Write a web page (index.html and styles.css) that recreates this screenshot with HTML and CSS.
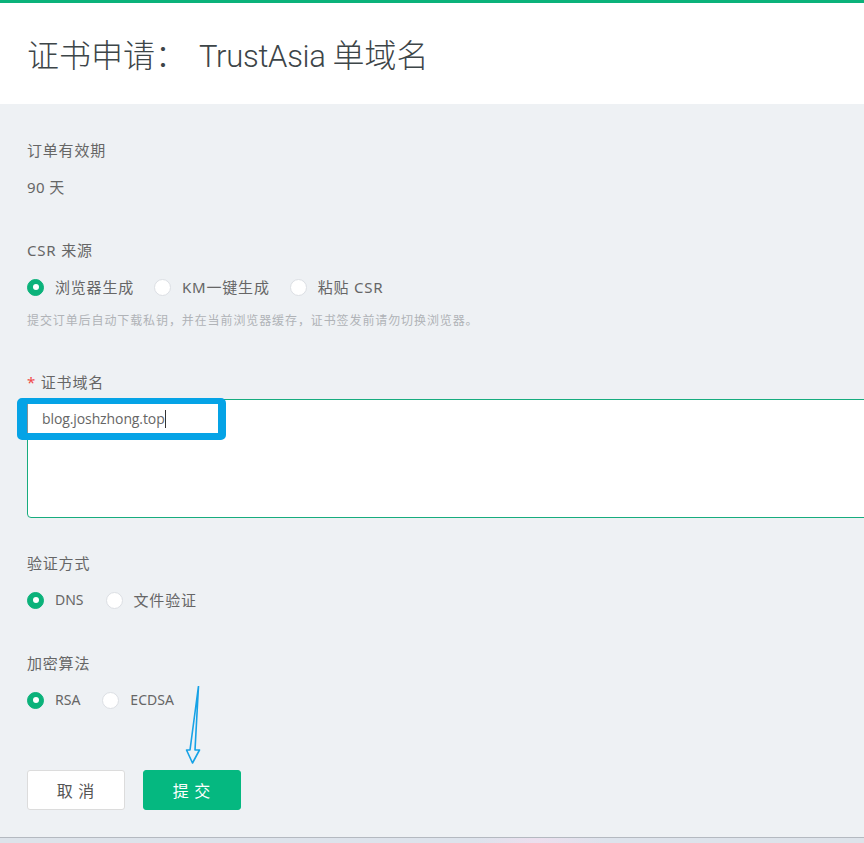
FILE: index.html
```html
<!DOCTYPE html>
<html lang="zh-CN">
<head>
<meta charset="utf-8">
<title>证书申请</title>
<link rel="stylesheet" href="styles.css">
</head>
<body>
<div class="page">
  <header class="header">
    <h1 class="title">证书申请：<span class="title-latin">TrustAsia</span> 单域名</h1>
  </header>
  <main class="main">
    <div class="field field-first">
      <div class="label">订单有效期</div>
      <div class="value">90 天</div>
    </div>

    <div class="field field-csr">
      <div class="label">CSR 来源</div>
      <div class="radios">
        <span class="radio checked"></span><span class="radio-label">浏览器生成</span>
        <span class="radio"></span><span class="radio-label">KM一键生成</span>
        <span class="radio"></span><span class="radio-label">粘贴 CSR</span>
      </div>
      <div class="help">提交订单后自动下载私钥，并在当前浏览器缓存，证书签发前请勿切换浏览器。</div>
    </div>

    <div class="field field-domain">
      <div class="label label-tight"><span class="req">*</span> 证书域名</div>
      <div class="textarea-wrap">
        <div class="textarea"></div>
        <div class="highlight"><span class="hl-text">blog.joshzhong.top</span><span class="caret"></span></div>
      </div>
    </div>

    <div class="field field-verify">
      <div class="label">验证方式</div>
      <div class="radios">
        <span class="radio checked"></span><span class="radio-label latin">DNS</span>
        <span class="radio"></span><span class="radio-label">文件验证</span>
      </div>
    </div>

    <div class="field field-algo">
      <div class="label">加密算法</div>
      <div class="radios">
        <span class="radio checked"></span><span class="radio-label latin">RSA</span>
        <span class="radio"></span><span class="radio-label latin">ECDSA</span>
      </div>
    </div>

    <div class="actions">
      <button class="btn btn-cancel">取 消</button>
      <button class="btn btn-submit">提 交</button>
    </div>

    <svg class="arrow" width="30" height="90" viewBox="180 680 30 90" xmlns="http://www.w3.org/2000/svg">
      <path d="M198.5 685 L190 749 L186.5 749 L192.5 762 L199.5 749 L195 749 L198.5 685" fill="none" stroke="#16a2e6" stroke-width="1.6" stroke-linejoin="round"/>
    </svg>
  </main>
  <div class="footer-strip"></div>
</div>
</body>
</html>
```

FILE: styles.css
```css
* { box-sizing: border-box; }

html, body {
  margin: 0;
  padding: 0;
  overflow: hidden;
}

body {
  font-family: "Noto Sans", "Noto Sans CJK SC", sans-serif;
  color: #666;
  background: #dfe4ec;
}

.page {
  width: 864px;
  height: 843px;
  display: flex;
  flex-direction: column;
}

.header {
  height: 104px;
  background: #fff;
  border-top: 3px solid #0bb27a;
  display: flex;
  align-items: center;
  padding-left: 27px;
  padding-top: 2px;
  flex-shrink: 0;
}

.title {
  margin: 0;
  font-family: "Noto Sans CJK SC", sans-serif;
  font-size: 32px;
  font-weight: 300;
  color: #3d4548;
  line-height: 40px;
}

.title-latin {
  font-family: "Roboto", "Noto Sans", sans-serif;
  font-size: 31px;
  font-weight: 300;
  letter-spacing: -0.3px;
  margin-left: 12px;
}

.main {
  position: relative;
  height: 734px;
  background: #eef1f4;
  padding: 36px 0 0 27px;
  border-bottom: 1px solid #b4b9c0;
  flex-shrink: 0;
}

.footer-strip {
  flex: 1;
  background: linear-gradient(90deg, #dde3ea 0%, #dde3ec 55%, #ecdfee 62%, #dde3ec 70%, #dde3ea 100%);
}

.label {
  font-size: 15px;
  letter-spacing: 0.8px;
  line-height: 20px;
  color: #666;
  margin-bottom: 17px;
}

.label-tight { margin-bottom: 7px; }

.req { color: #f04a4a; }

.value {
  font-size: 15px;
  letter-spacing: 0.4px;
  line-height: 20px;
  color: #666;
}

.field-csr { margin-top: 43px; }
.field-domain { margin-top: 42px; }
.field-verify { margin-top: 35px; }
.field-algo { margin-top: 43px; }

.radios {
  display: flex;
  align-items: center;
  height: 20px;
  font-size: 15px;
}

.radio {
  width: 17px;
  height: 17px;
  border-radius: 50%;
  background: #fff;
  border: 1px solid #dcdfe4;
  margin-right: 11px;
  flex-shrink: 0;
  display: flex;
  align-items: center;
  justify-content: center;
}

.radio.checked {
  background: #0bb27a;
  border-color: #0bb27a;
}

.radio.checked::after {
  content: "";
  width: 6px;
  height: 6px;
  border-radius: 50%;
  background: #fff;
}

.radio-label {
  color: #666;
  margin-right: 20px;
  line-height: 20px;
  letter-spacing: 0.8px;
}

.radio-label.latin {
  letter-spacing: 0;
  font-size: 14px;
  margin-right: 22px;
}

.help {
  margin-top: 15px;
  font-size: 12px;
  letter-spacing: 0.9px;
  line-height: 18px;
  color: #b0b3b7;
}

.textarea-wrap {
  position: relative;
}

.textarea {
  width: 900px;
  height: 119px;
  background: #fff;
  border: 1px solid #17ac7e;
  border-radius: 4px;
}

.highlight {
  position: absolute;
  left: -10px;
  top: -1px;
  width: 209px;
  height: 42px;
  border-style: solid;
  border-color: #05a3e6;
  border-width: 6px 8px 7px 10px;
  border-radius: 5px;
  background: #fff;
  display: flex;
  align-items: center;
  padding-left: 15px;
  box-shadow: inset 1px 0 0 #8a9094;
}

.hl-text {
  font-family: "Open Sans", "Noto Sans", sans-serif;
  font-size: 14px;
  color: #666;
  line-height: 20px;
  letter-spacing: -0.1px;
}

.caret {
  width: 1px;
  height: 18px;
  background: #333;
}

.actions {
  display: flex;
  margin-top: 60px;
}

.btn {
  width: 98px;
  height: 40px;
  border-radius: 3px;
  font-family: "Noto Sans CJK SC", "Noto Sans", sans-serif;
  font-size: 16px;
  letter-spacing: 1px;
  cursor: pointer;
  padding: 0;
}

.btn-cancel {
  background: #fff;
  border: 1px solid #dcdcdc;
  color: #555;
  margin-right: 18px;
}

.btn-submit {
  background: #05b880;
  border: 1px solid #05b880;
  color: #fff;
}

.arrow {
  position: absolute;
  left: 180px;
  top: 577px;
}
```
